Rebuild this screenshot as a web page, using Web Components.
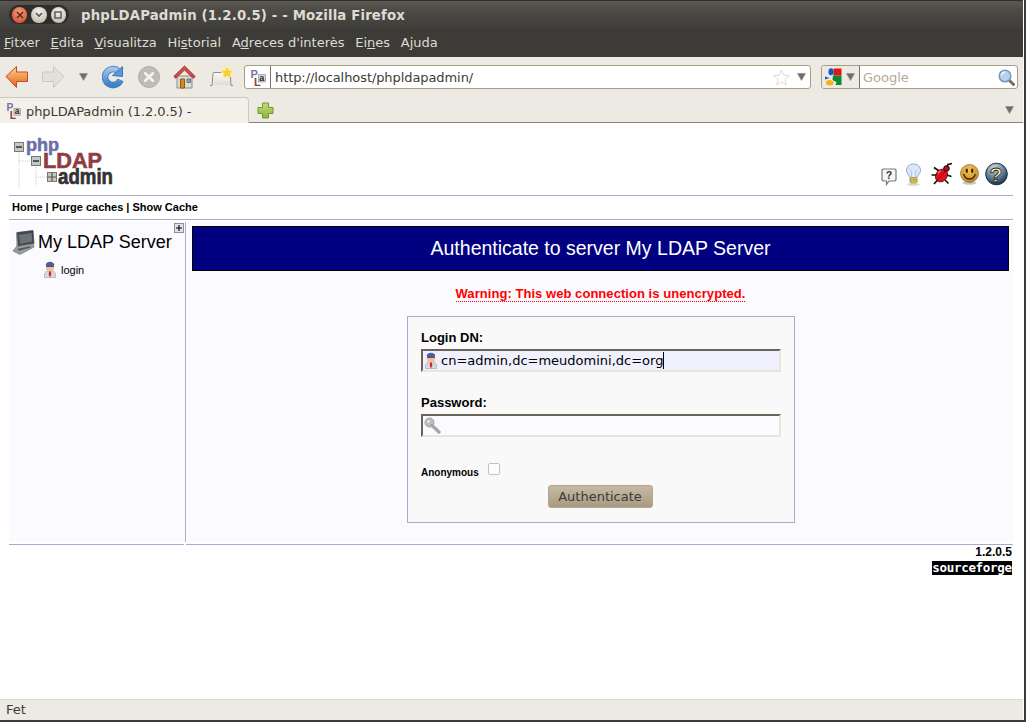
<!DOCTYPE html>
<html lang="ca">
<head>
<meta charset="utf-8">
<title>phpLDAPadmin (1.2.0.5) - - Mozilla Firefox</title>
<style>
  html, body { margin: 0; height: 100%; background: #fff; overflow: hidden; }
</style>
</head>
<body>
<ff-window>
  <ff-titlebar slot="chrome">phpLDAPadmin (1.2.0.5) - - Mozilla Firefox</ff-titlebar>
  <ff-menubar slot="chrome"></ff-menubar>
  <ff-toolbar slot="chrome" url="http://localhost/phpldapadmin/"></ff-toolbar>
  <ff-tabstrip slot="chrome">phpLDAPadmin (1.2.0.5) -</ff-tabstrip>

  <pla-page>
    <pla-header></pla-header>
    <pla-body>
      <pla-sidebar slot="side" server="My LDAP Server"></pla-sidebar>
      <pla-title>Authenticate to server My LDAP Server</pla-title>
      <pla-warning>Warning: This web connection is unencrypted.</pla-warning>
      <pla-login>
        <pla-field label="Login DN:" icon="user" tint="#f0f0ff" caret>cn=admin,dc=meudomini,dc=org</pla-field>
        <pla-field label="Password:" icon="key" tint="#fbfbff"></pla-field>
      </pla-login>
    </pla-body>
    <pla-footer>1.2.0.5</pla-footer>
  </pla-page>

  <ff-statusbar slot="status">Fet</ff-statusbar>
</ff-window>

<script>
// icons, all drawn by hand from the reference
const icon = {
  triangle: `<svg width="9" height="8" viewBox="0 0 9 8"><path d="M0.5 0.5h8L4.5 7.5z" fill="#6f6e68" stroke="#8b8a84" stroke-width=".6"/></svg>`,

  back: `<svg width="24" height="24" viewBox="0 0 24 24"><defs><linearGradient id="ba" x1="0" y1="0" x2="0" y2="1"><stop offset="0" stop-color="#fcd29a"/><stop offset=".55" stop-color="#f0934a"/><stop offset="1" stop-color="#e2611f"/></linearGradient></defs><path d="M1 11.500 11.500 1.500v5.500h11v9.500h-11v6z" fill="url(#ba)" stroke="#c94a1c" stroke-linejoin="round"/></svg>`,

  forward: `<svg width="24" height="24" viewBox="0 0 24 24"><path d="M23 11.500 12.500 1.500v5.500h-11v9.500h11v6z" fill="#e2e0db" stroke="#cbc9c3" stroke-linejoin="round"/></svg>`,

  reload: `<svg width="23" height="24" viewBox="0 0 23 24"><defs><linearGradient id="re" x1="0" y1="0" x2="0" y2="1"><stop offset="0" stop-color="#9cc4ea"/><stop offset="1" stop-color="#3f7fc4"/></linearGradient></defs><path d="M16 5.800A8 8 0 1 0 18.500 15" fill="none" stroke="#3a78bd" stroke-width="6.500"/><path d="M16 5.800A8 8 0 1 0 18.500 15" fill="none" stroke="url(#re)" stroke-width="5"/><path d="M20.500 1.500V11.500L10.500 10.500z" fill="#5a98d6" stroke="#3a78bd" stroke-linejoin="round"/></svg>`,

  stop: `<svg width="22" height="22" viewBox="0 0 22 22"><circle cx="11" cy="11" r="10.500" fill="#bfbbb5" stroke="#b0aca6"/><path d="M7.200 7.200l7.600 7.600M14.800 7.200l-7.600 7.600" stroke="#f4f2ee" stroke-width="2.800" stroke-linecap="round"/></svg>`,

  home: `<svg width="23" height="24" viewBox="0 0 23 24"><path d="M4 11h15v12H4z" fill="#dcdad6" stroke="#8f8c86"/><path d="M7.500 14h4v9h-4z" fill="#d98a1e" stroke="#8a5a10"/><path d="M14 14h3.500v3.500H14z" fill="#8fa7bd" stroke="#6c7278"/><path d="M0.800 11.500 11.500 1 22.200 11.500l-2 1.700-8.700-8.200-8.700 8.200z" fill="#cf4d4d" stroke="#a33232" stroke-linejoin="round"/></svg>`,

  bookmark: `<svg width="25" height="24" viewBox="0 0 25 24"><defs><linearGradient id="bk" x1="0" y1="0" x2="0" y2="1"><stop offset="0" stop-color="#fbfaf8"/><stop offset="1" stop-color="#dfddd8"/></linearGradient></defs><path d="M3 20L4 8.500Q4 7.500 5 7.500H19.500L21.500 20z" fill="url(#bk)"/><path d="M1 20.500h2L4 8.500Q4 7.500 5 7.500H13" fill="none" stroke="#8f8d88"/><path d="M21.500 12 22 20.500h2" fill="none" stroke="#8f8d88"/><circle cx="18" cy="7.500" r="5.800" fill="#fbeb9a"/><path d="M18 3.300l1.300 2.900 3 .3-2.300 2 .7 3-2.700-1.600-2.700 1.600.7-3-2.300-2 3-.3z" fill="#f6d32d" stroke="#e6b820" stroke-width=".5"/></svg>`,

  favicon: `<svg width="16" height="17" viewBox="0 0 16 17"><text x="0.500" y="9" font-family="Liberation Sans" font-weight="700" font-size="11" fill="#7274a8">P</text><text x="4" y="16.500" font-family="Liberation Sans" font-weight="700" font-size="11" fill="#8f3d42">L</text><rect x="8.500" y="5.500" width="7" height="7.500" fill="#d8d8d8" stroke="#777" stroke-width=".5"/><text x="9.300" y="12" font-family="Liberation Sans" font-weight="700" font-size="9" fill="#222">a</text></svg>`,

  star: `<svg width="17" height="17" viewBox="0 0 17 17"><path d="M8.500 1l2.200 5.200 5.600.5-4.300 3.700 1.300 5.500-4.800-2.900-4.800 2.900 1.300-5.500L.7 6.700l5.600-.5z" fill="#fff" stroke="#dcdad5"/></svg>`,

  google: `<svg width="17" height="18" viewBox="0 0 17 18"><rect x="8.500" y="0.500" width="8" height="7" fill="#e01515"/><path d="M8 7.500h8.500V17H10.500l1-2.500c-1-1.500-3.500-1.500-4-3z" fill="#0c8a32"/><ellipse cx="6" cy="3.700" rx="2.600" ry="3.500" fill="#1257c2"/><path d="M0 8.500l4.500 1.500L0 11.500z" fill="#1257c2"/><ellipse cx="4.700" cy="14.800" rx="3.700" ry="2.700" fill="#f0b416"/></svg>`,

  search: `<svg width="17" height="17" viewBox="0 0 17 17"><path d="M11 11l4.500 4.500" stroke="#6f6d68" stroke-width="3" stroke-linecap="round"/><circle cx="7" cy="7" r="5.800" fill="#b8d2ee" stroke="#7a98bc" stroke-width="1.500"/><path d="M3.500 6A4 4 0 0 1 7.500 3" fill="none" stroke="#fff" stroke-width="1.200"/></svg>`,

  newtab: `<svg width="17" height="17" viewBox="0 0 17 17"><defs><linearGradient id="nt" x1="0" y1="0" x2="0" y2="1"><stop offset="0" stop-color="#c5dd7c"/><stop offset="1" stop-color="#8cb43a"/></linearGradient></defs><path d="M5.500 1h6v4.500H16v6h-4.500V16h-6v-4.500H1v-6h4.500z" fill="url(#nt)" stroke="#75982e" stroke-linejoin="round"/></svg>`,

  user: `<svg width="14" height="17" viewBox="0 0 14 17"><path d="M1.500 16.500v-3.300c0-2.200 2.200-3.200 5.500-3.200s5.500 1 5.500 3.200v3.300z" fill="#d9d8df" stroke="#a09ea8" stroke-width=".6"/><path d="M6.200 10h1.600l.5 3.500L7 16.500l-1.300-3z" fill="#d8232a"/><ellipse cx="7" cy="6.500" rx="4.200" ry="4" fill="#f2bf9e"/><path d="M2.600 4C3.100 1.600 5 .7 7 .7s3.900.9 4.400 3.300z" fill="#4d59ab"/><rect x="3" y="4.300" width="8" height="1.500" rx=".6" fill="#2b3060"/></svg>`,

  key: `<svg width="17" height="17" viewBox="0 0 17 17"><circle cx="5.500" cy="5.500" r="4.500" fill="#bdbdbd" stroke="#a0a0a0"/><circle cx="4.500" cy="4.500" r="1.300" fill="#ececec"/><path d="M8 8.500l7 6.500" stroke="#a6a6a6" stroke-width="3.400" stroke-linecap="round"/></svg>`,

  computer: `<svg width="23" height="25" viewBox="0 0 23 25"><path d="M5 2.500 21 0.500 22 13.500 6 16.500z" fill="#44474c" stroke="#2c2e32" stroke-width=".6"/><path d="M7 5 19.500 3 20.300 11.500 8 14z" fill="#6d7278"/><path d="M4 2.800 5 2.500 6 16.500 4.500 17z" fill="#8a8d92"/><path d="M1 21 4.500 16.500 21.500 13.500 22 17 8 24.500z" fill="#9b9d9f" stroke="#66686b" stroke-width=".6"/><path d="M5 19 18 16.200 18.800 17.500 7 20.700z" fill="#55585b"/></svg>`,

  plus: `<svg width="10" height="10" viewBox="0 0 10 10"><rect x=".5" y=".5" width="9" height="9" fill="#dfe3e6" stroke="#8d9194"/><path d="M5 2v6M2 5h6" stroke="#000" stroke-width="1.100"/></svg>`,

  hint: `<svg width="16" height="19" viewBox="0 0 16 19"><path d="M2 2h12l1 1v10l-1 1H8l-2.500 3.500V14H2l-1-1V3z" fill="#f6f6f6" stroke="#77797c" stroke-width="1.200"/><text x="8" y="12" text-anchor="middle" font-family="Liberation Sans" font-weight="700" font-size="10.500" fill="#333">?</text></svg>`,

  bulb: `<svg width="17" height="23" viewBox="0 0 17 23"><ellipse cx="8.500" cy="21.500" rx="6.500" ry="1.500" fill="#d8d8d8"/><path d="M8.500 1C4.200 1 1.500 3.900 1.500 7.300c0 3 2.500 4.300 3.300 7.200h7.400c.8-2.900 3.300-4.200 3.300-7.200C15.500 3.900 12.800 1 8.500 1z" fill="#dbe8f8" stroke="#8ea8cc"/><path d="M6.500 14V9L5 6.500M10.500 14V9L12 6.500" fill="none" stroke="#a9bcd8" stroke-width=".7"/><rect x="4.800" y="14.500" width="7.400" height="5.500" rx="1.500" fill="#e8d070" stroke="#a89432" stroke-width=".7"/><path d="M5 16.300h7M5 18.100h7" stroke="#a08a28" stroke-width=".8"/></svg>`,

  bug: `<svg width="23" height="24" viewBox="0 0 23 24"><path d="M8 9 3 5.500M6 13 0.500 13M7.500 17 3 22M14 18l3.500 3.500M15.500 13l5 1.500M15 7l2-4.500L21 1.500" fill="none" stroke="#111" stroke-width="1.700"/><ellipse cx="10.500" cy="13.500" rx="5.500" ry="6.800" transform="rotate(38 10.500 13.500)" fill="#e5101e" stroke="#400" stroke-width=".8"/><path d="M6.500 18 14.500 9" stroke="#7a0610" stroke-width=".9"/><circle cx="15.500" cy="6.500" r="2.800" fill="#b80c16" stroke="#200"/><path d="M7 11.500a3 3 0 0 1 3-2.500" stroke="#ff9aa0" fill="none"/></svg>`,

  smile: `<svg width="19" height="21" viewBox="0 0 19 21"><defs><radialGradient id="sm" cx=".45" cy=".3" r=".8"><stop offset="0" stop-color="#f2c25c"/><stop offset=".7" stop-color="#d4952a"/><stop offset="1" stop-color="#8a5f1a"/></radialGradient></defs><ellipse cx="9.500" cy="19" rx="7" ry="1.800" fill="#c9c9c9"/><circle cx="9.500" cy="9.500" r="9" fill="url(#sm)" stroke="#8e6a22" stroke-width=".7"/><ellipse cx="6.800" cy="6.800" rx="1.200" ry="2.200" fill="#3a2a08"/><ellipse cx="12.200" cy="6.800" rx="1.200" ry="2.200" fill="#3a2a08"/><path d="M3.800 10.500c1 3.500 3.400 4.500 5.700 4.500s4.700-1 5.700-4.500" fill="none" stroke="#3a2a08" stroke-width="1.300" stroke-linecap="round"/></svg>`,

  helpball: `<svg width="23" height="24" viewBox="0 0 23 24"><defs><radialGradient id="hb" cx=".4" cy=".22" r=".85"><stop offset="0" stop-color="#d0dce4"/><stop offset=".55" stop-color="#5d7d94"/><stop offset="1" stop-color="#10283c"/></radialGradient></defs><circle cx="11.500" cy="12" r="10.800" fill="url(#hb)" stroke="#16304a"/><text x="11" y="20" text-anchor="middle" font-family="Liberation Sans" font-weight="700" font-size="21" fill="#f6e8a8" stroke="#22221a" stroke-width=".8">?</text></svg>`,
};

// every element is the same thing: a template in an open shadow root
class Part extends HTMLElement {
  constructor() {
    super();
    this.attachShadow({ mode: 'open' });
    this.shadowRoot.innerHTML = `<style>${this.css()}</style>${this.html()}`;
  }
  css() { return ':host { display: block; }'; }
  html() { return '<slot></slot>'; }
}

const uiFont = `"DejaVu Sans", sans-serif`;
const pageFont = `"Liberation Sans", Arial, sans-serif`;

class FfWindow extends Part {
  css() {
    return `
      :host { display: flex; flex-direction: column; height: 100vh; box-sizing: border-box;
              border-right: 2px solid #3c3b37; padding-right: 1px; border-bottom: 2px solid #3c3b37; }
      main { flex: 1; min-height: 0; background: #fff; }
    `;
  }
  html() {
    return `<slot name="chrome"></slot><main><slot></slot></main><slot name="status"></slot>`;
  }
}

class FfTitlebar extends Part {
  css() {
    return `
      :host { display: flex; align-items: center; height: 28px; box-sizing: border-box; padding: 0 0 0 9px;
              background: linear-gradient(#595852 0, #4b4a45 10px, #3f3e3a 100%);
              border-top: 1px solid #2f2e2b;
              font: bold 13.3px ${uiFont}; color: #dfdbd2; }
      .buttons { display: flex; align-items: center; gap: 4px; width: 60px; height: 19px; box-sizing: border-box;
                 padding: 0 3px; margin-right: 12px; border-radius: 10px; background: #2e2d2a; }
      .b { width: 16px; height: 16px; border-radius: 50%; display: flex; align-items: center; justify-content: center;
           background: radial-gradient(circle at 50% 30%, #f4f1ea, #b5b1a6); }
      .close { background: radial-gradient(circle at 50% 30%, #f59a72, #d0472a); }
      .title { letter-spacing: 0.14px; white-space: nowrap; margin-top: 2px; }
    `;
  }
  html() {
    return `
      <div class="buttons">
        <div class="b close"><svg width="8" height="8" viewBox="0 0 8 8"><path d="M1 1l6 6M7 1L1 7" stroke="#5c2a1a" stroke-width="1.600"/></svg></div>
        <div class="b"><svg width="8" height="6" viewBox="0 0 8 6"><path d="M1 1l3 3 3-3" fill="none" stroke="#55534d" stroke-width="1.600"/></svg></div>
        <div class="b"><svg width="8" height="8" viewBox="0 0 8 8"><rect x="1" y="1" width="6" height="6" fill="none" stroke="#55534d" stroke-width="1.400"/></svg></div>
      </div>
      <span class="title"><slot></slot></span>`;
  }
}

class FfMenubar extends Part {
  css() {
    return `
      :host { display: flex; align-items: center; height: 29px; padding: 0 0 1px 4px; box-sizing: border-box; gap: 10.700px;
              background: #3c3b37; font: 13px ${uiFont}; color: #dfdbd2; white-space: nowrap; }
      u { text-underline-offset: 1px; }
    `;
  }
  html() {
    return `
      <span><u>F</u>itxer</span>
      <span><u>E</u>dita</span>
      <span><u>V</u>isualitza</span>
      <span>Hi<u>s</u>torial</span>
      <span>A<u>d</u>reces d'interès</span>
      <span>Ei<u>n</u>es</span>
      <span>A<u>j</u>uda</span>`;
  }
}

class FfToolbar extends Part {
  css() {
    return `
      :host { display: flex; align-items: center; height: 40px; box-sizing: border-box; padding: 0 7px 0 5px;
              background: #edeae3; font: 13px ${uiFont}; color: #3c3b37; white-space: nowrap; }
      .tool { display: flex; }
      .t-back { margin-right: 12px; }
      .t-fwd { margin-right: 14px; }
      .t-drop { margin-right: 14px; }
      .t-reload { margin-right: 13px; }
      .t-stop { margin-right: 13px; }
      .t-home { margin-right: 13px; }
      .t-mark { margin-right: 10px; }
      .box { display: flex; align-items: center; height: 24px; box-sizing: border-box; background: #fff;
             border: 1px solid #a79e88; border-radius: 3px; }
      .url { flex: 0 0 567px; padding: 0 4px 0 5px; }
      .sep { width: 1px; height: 22px; background: #77736a; margin: 0 4px 0 4px; }
      .addr { flex: 1; font-size: 13px; letter-spacing: -.08px; }
      .url .mark { margin-right: 7px; display: flex; }
      .search { flex: 0 0 197px; margin-left: 10px; overflow: hidden; }
      .engine { display: flex; align-items: center; gap: 4px; width: 38px; height: 100%; box-sizing: border-box;
                padding-left: 3px; background: #ede9e3; border-right: 1px solid #77736a; }
      .hint { flex: 1; margin-left: 3px; color: #b9a98f; }
      .search .go { display: flex; margin-right: 2px; }
    `;
  }
  html() {
    return `
      <span class="tool t-back">${icon.back}</span>
      <span class="tool t-fwd">${icon.forward}</span>
      <span class="tool t-drop">${icon.triangle}</span>
      <span class="tool t-reload">${icon.reload}</span>
      <span class="tool t-stop">${icon.stop}</span>
      <span class="tool t-home">${icon.home}</span>
      <span class="tool t-mark">${icon.bookmark}</span>
      <div class="box url">
        ${icon.favicon}<span class="sep"></span>
        <span class="addr">${this.getAttribute('url')}</span>
        <span class="mark">${icon.star}</span>${icon.triangle}
      </div>
      <div class="box search">
        <span class="engine">${icon.google}${icon.triangle}</span>
        <span class="hint">Google</span>
        <span class="go">${icon.search}</span>
      </div>`;
  }
}

class FfTabstrip extends Part {
  css() {
    return `
      :host { display: flex; align-items: flex-end; height: 26px; box-sizing: border-box; padding-right: 9px;
              background: #edeae3; border-bottom: 1px solid #8a8170; font: 13px ${uiFont}; color: #3c3b37; white-space: nowrap; }
      .tab { display: flex; align-items: center; gap: 5px; width: 249px; height: 26px; box-sizing: border-box; padding: 2px 0 0 6px;
             margin-bottom: -1px; background: #f3f0ea; border: 1px solid #cfc8ba; border-left: 0; border-bottom: 1px solid #f3f0ea;
             border-radius: 0 4px 0 0; letter-spacing: -.08px; }
      .tab svg { width: 15px; height: 16px; }
      .new { display: flex; margin: 0 0 3px 8px; }
      .more { display: flex; margin: 0 0 8px auto; }
    `;
  }
  html() {
    return `
      <div class="tab">${icon.favicon}<span><slot></slot></span></div>
      <span class="new">${icon.newtab}</span>
      <span class="more">${icon.triangle}</span>`;
  }
}

class FfStatusbar extends Part {
  css() {
    return `
      :host { display: flex; align-items: center; height: 21px; box-sizing: border-box; padding: 0 6px 2px;
              background: #edeae3; border-top: 1px solid #dcd6cb; font: 13px ${uiFont}; color: #3c3b37; }
    `;
  }
}

class PlaPage extends Part {
  css() {
    return `
      :host { display: block; padding: 0 10px 0 9px; font: 11px ${pageFont}; color: #000; }
    `;
  }
}

class PlaHeader extends Part {
  css() {
    return `
      :host { display: block; }
      .top { display: flex; justify-content: space-between; align-items: flex-end; height: 73px; box-sizing: border-box;
             border-bottom: 1px solid #aaaacc; padding: 0 5px 5px 5px; }
      .logo { display: block; overflow: visible; }
      .icons { display: flex; align-items: flex-end; margin-bottom: 4px; }
      .icons span { display: flex; }
      .nav { height: 24px; box-sizing: border-box; border-bottom: 1px solid #aaaacc; padding: 0 0 2px 3px;
             display: flex; align-items: center; font-weight: bold; font-size: 11px; }
    `;
  }
  html() {
    return `
      <div class="top">
        <svg class="logo" width="100" height="58" viewBox="14 132 100 58">
          <path d="M19 152v35M19 161h12M36 167v20M36 177h11" stroke="#c9c9c9" stroke-dasharray="1 1" fill="none"/>
          <g fill="#c6c6c6" stroke="#777"><rect x="14.500" y="142.500" width="9" height="9"/><rect x="31.500" y="156.500" width="9" height="9"/><rect x="47.500" y="172.500" width="9" height="9"/></g>
          <path d="M16 147h6M33 161h6" stroke="#555" stroke-width="2"/>
          <path d="M48 177h8M52 173v8" stroke="#555" stroke-width="1.200"/>
          <text x="26" y="151" textLength="33" lengthAdjust="spacingAndGlyphs" font-family="Liberation Sans" font-weight="700" font-size="19" fill="#6d6fa8" stroke="#6d6fa8" stroke-width=".6">php</text>
          <text x="43" y="168" textLength="59" lengthAdjust="spacingAndGlyphs" font-family="Liberation Sans" font-weight="700" font-size="22" fill="#8f3d42" stroke="#8f3d42" stroke-width=".6">LDAP</text>
          <text x="58" y="184" textLength="55" lengthAdjust="spacingAndGlyphs" font-family="Liberation Sans" font-weight="700" font-size="22" fill="#333" stroke="#333" stroke-width=".7">admin</text>
        </svg>
        <div class="icons">
          <span>${icon.hint}</span>
          <span style="margin-left:8px">${icon.bulb}</span>
          <span style="margin-left:9px">${icon.bug}</span>
          <span style="margin-left:6px;margin-bottom:1px">${icon.smile}</span>
          <span style="margin-left:6px">${icon.helpball}</span>
        </div>
      </div>
      <div class="nav">Home | Purge caches | Show Cache</div>`;
  }
}

class PlaBody extends Part {
  css() {
    return `
      :host { display: grid; grid-template-columns: 177px 1fr; grid-template-rows: 1fr 1px; row-gap: 2px;
              height: 325px; box-sizing: border-box; padding-top: 2px; background: #fff; }
      .side { background: #fafaff; border-right: 1px solid #aaaacc; }
      .main { background: #fafaff; margin-left: 1px; padding: 4px 4px 0 5px; }
      .rule { background: #aaaacc; }
      .rule.a { margin-right: 2px; }
    `;
  }
  html() {
    return `
      <div class="side"><slot name="side"></slot></div>
      <div class="main"><slot></slot></div>
      <div class="rule a"></div>
      <div class="rule"></div>`;
  }
}

class PlaSidebar extends Part {
  css() {
    return `
      :host { display: block; padding: 1px 0 0 3px; }
      .tools { display: flex; justify-content: flex-end; padding-right: 1px; height: 10px; }
      .tools span { display: flex; }
      .server { display: flex; align-items: center; gap: 3px; margin-top: -3px; height: 24px; font-size: 18px; white-space: nowrap; }
      .server span { display: flex; }
      .login { display: flex; align-items: center; gap: 4px; margin: 7px 0 0 31px; height: 17px; font-size: 11px; }
      .login span { display: flex; }
    `;
  }
  html() {
    return `
      <div class="tools"><span>${icon.plus}</span></div>
      <div class="server"><span>${icon.computer}</span>${this.getAttribute('server')}</div>
      <div class="login"><span>${icon.user}</span>login</div>`;
  }
}

class PlaTitle extends Part {
  css() {
    return `
      :host { display: flex; align-items: center; justify-content: center; height: 45px; box-sizing: border-box;
              background: #000080; border: 1px solid #000; color: #fff; font-size: 19.500px; }
    `;
  }
}

class PlaWarning extends Part {
  css() {
    return `
      :host { display: block; text-align: center; margin-top: 15px; height: 15px; line-height: 15px;
              color: #f00; font-weight: bold; font-size: 13px; letter-spacing: .05px; }
      span { border-bottom: 1px dotted #f00; }
    `;
  }
  html() { return `<span><slot></slot></span>`; }
}

class PlaLogin extends Part {
  css() {
    return `
      :host { display: block; width: 388px; height: 207px; box-sizing: border-box; margin: 15px 0 0 215px;
              padding: 13px 13px 0; background: #f9f9f9; border: 1px solid #aaaacc; }
      .fields { display: flex; flex-direction: column; gap: 23px; }
      .anon { display: flex; align-items: flex-start; gap: 9px; margin-top: 26px; height: 13px; font-weight: bold; font-size: 10px; }
      .anon span { margin-top: 3px; line-height: 13px; }
      .check { appearance: none; -webkit-appearance: none; display: block; margin: 0; width: 12px; height: 12px; box-sizing: border-box;
               border: 1px solid #c9c2b4; border-radius: 2px; background: #fdfdfb; }
      .row { display: flex; justify-content: center; margin-top: 9px; padding-right: 2px; }
      button { width: 105px; height: 23px; padding: 0; border: 1px solid #b3a68f; border-radius: 3px;
               background: linear-gradient(#c7baa5, #a99a82); font: 13px ${uiFont}; color: #3c3b37; }
    `;
  }
  html() {
    return `
      <div class="fields"><slot></slot></div>
      <div class="anon"><span>Anonymous</span><input class="check" type="checkbox"></div>
      <div class="row"><button type="button">Authenticate</button></div>`;
  }
}

class PlaField extends Part {
  css() {
    return `
      :host { display: block; }
      label { display: block; height: 15px; line-height: 15px; margin-bottom: 4px; font-weight: bold; font-size: 13px; }
      .input { display: flex; align-items: center; width: 360px; height: 23px; box-sizing: border-box;
               border: 2px solid; border-color: #6b6258 #e9e5dd #e9e5dd #6b6258;
               font: 13px ${uiFont}; color: #000; white-space: nowrap; }
      .icon { display: flex; margin: 0 3px 0 1px; }
      .caret { width: 1px; height: 17px; background: #000; }
    `;
  }
  html() {
    const caret = this.hasAttribute('caret') ? '<span class="caret"></span>' : '';
    return `
      <label>${this.getAttribute('label')}</label>
      <div class="input" style="background:${this.getAttribute('tint')}">
        <span class="icon">${icon[this.getAttribute('icon')]}</span><slot></slot>${caret}
      </div>`;
  }
}

class PlaFooter extends Part {
  css() {
    return `
      :host { display: flex; flex-direction: column; align-items: flex-end; padding: 1px 1px 0 0; font-weight: bold; font-size: 12px; line-height: 13px; }
      .sf { width: 80px; height: 14px; margin-top: 2px; background: #000; color: #fff; text-align: center;
            font: bold 12.500px/14px "DejaVu Sans Mono", monospace; letter-spacing: -.3px; }
    `;
  }
  html() {
    return `<span><slot></slot></span><div class="sf">sourceforge</div>`;
  }
}

customElements.define('ff-window', FfWindow);
customElements.define('ff-titlebar', FfTitlebar);
customElements.define('ff-menubar', FfMenubar);
customElements.define('ff-toolbar', FfToolbar);
customElements.define('ff-tabstrip', FfTabstrip);
customElements.define('ff-statusbar', FfStatusbar);
customElements.define('pla-page', PlaPage);
customElements.define('pla-header', PlaHeader);
customElements.define('pla-body', PlaBody);
customElements.define('pla-sidebar', PlaSidebar);
customElements.define('pla-title', PlaTitle);
customElements.define('pla-warning', PlaWarning);
customElements.define('pla-login', PlaLogin);
customElements.define('pla-field', PlaField);
customElements.define('pla-footer', PlaFooter);
</script>
</body>
</html>
